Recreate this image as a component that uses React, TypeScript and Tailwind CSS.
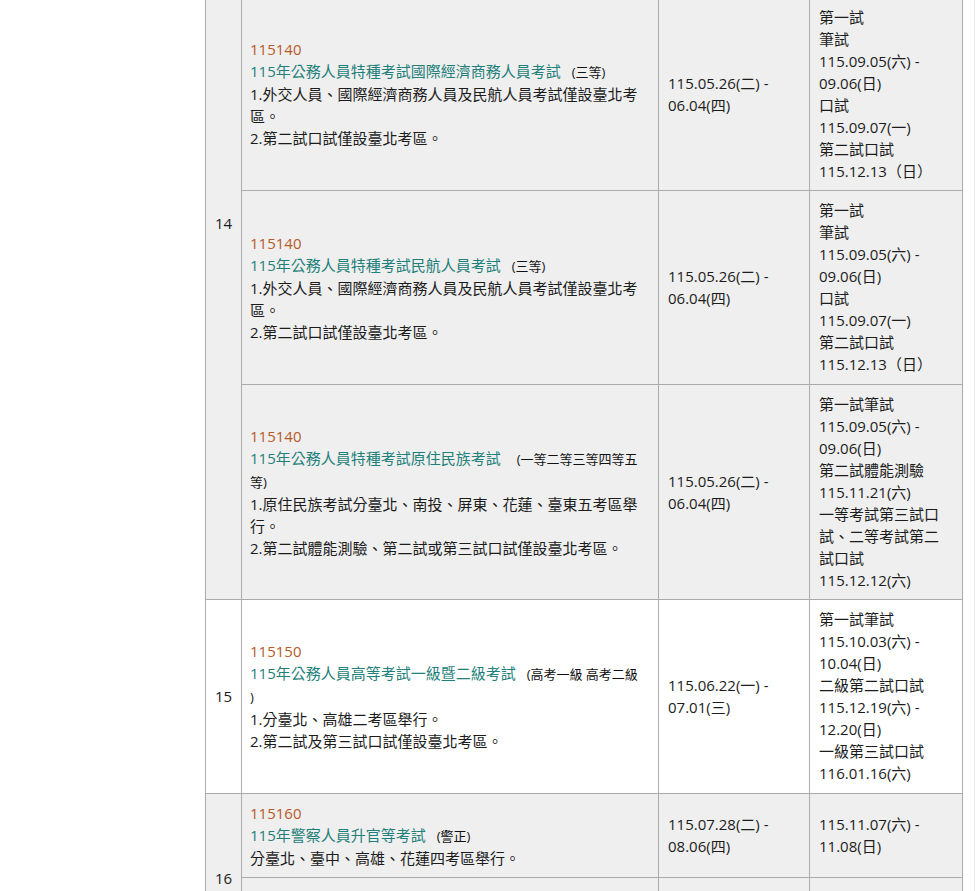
import React from "react";

const ORANGE = "text-[#b85a2a]";
const TEAL = "text-[#1f7f7a]";

type Item = {
  code: string;
  title: string;
  level: React.ReactNode;
  levelGap?: boolean;
  notes: React.ReactNode[];
  apply: React.ReactNode[];
  exam: React.ReactNode[];
};

function Middle({ it }: { it: Item }) {
  return (
    <>
      <div className={ORANGE}>{it.code}</div>
      <div>
        <span className={TEAL}>{it.title}</span>{" "}
        <span className={"text-[13px] text-[#111] " + (it.levelGap ? "ml-[12px]" : "ml-[7px]")}>{it.level}</span>
      </div>
      {it.notes.map((n, i) => (
        <div key={i}>{n}</div>
      ))}
    </>
  );
}

function Lines({ lines }: { lines: React.ReactNode[] }) {
  return (
    <>
      {lines.map((l, i) => (
        <div key={i}>{l}</div>
      ))}
    </>
  );
}

const td = "border border-[#ababab] px-2 py-[8.25px] align-middle";
const tdR = "border border-[#ababab] pl-[9px] pr-[10px] py-[8.25px] align-middle";

const group14: Item[] = [
  {
    code: "115140",
    title: "115年公務人員特種考試外交領事人員及外交行政人員考試",
    level: "(三等)",
    notes: ["1.外交人員、國際經濟商務人員及民航人員考試僅設臺北考區。", "2.第二試口試僅設臺北考區。"],
    apply: ["115.05.26(二) -", "06.04(四)"],
    exam: ["第一試筆試", "115.09.05(六) -", "09.06(日)", "第二試口試", "115.12.13（日）"],
  },
  {
    code: "115140",
    title: "115年公務人員特種考試國際經濟商務人員考試",
    level: "(三等)",
    notes: ["1.外交人員、國際經濟商務人員及民航人員考試僅設臺北考區。", "2.第二試口試僅設臺北考區。"],
    apply: ["115.05.26(二) -", "06.04(四)"],
    exam: ["第一試", "筆試", "115.09.05(六) -", "09.06(日)", "口試", "115.09.07(一)", "第二試口試", "115.12.13（日）"],
  },
  {
    code: "115140",
    title: "115年公務人員特種考試民航人員考試",
    level: "(三等)",
    notes: ["1.外交人員、國際經濟商務人員及民航人員考試僅設臺北考區。", "2.第二試口試僅設臺北考區。"],
    apply: ["115.05.26(二) -", "06.04(四)"],
    exam: ["第一試", "筆試", "115.09.05(六) -", "09.06(日)", "口試", "115.09.07(一)", "第二試口試", "115.12.13（日）"],
  },
  {
    code: "115140",
    title: "115年公務人員特種考試原住民族考試",
    level: (
      <>
        (一等二等三等四等五
        <br />
        等)
      </>
    ),
    levelGap: true,
    notes: ["1.原住民族考試分臺北、南投、屏東、花蓮、臺東五考區舉行。", "2.第二試體能測驗、第二試或第三試口試僅設臺北考區。"],
    apply: ["115.05.26(二) -", "06.04(四)"],
    exam: ["第一試筆試", "115.09.05(六) -", "09.06(日)", "第二試體能測驗", "115.11.21(六)", "一等考試第三試口試、二等考試第二試口試", "115.12.12(六)"],
  },
];

const group15: Item[] = [
  {
    code: "115150",
    title: "115年公務人員高等考試一級暨二級考試",
    level: (
      <>
        (高考一級 高考二級
        <br />)
      </>
    ),
    notes: ["1.分臺北、高雄二考區舉行。", "2.第二試及第三試口試僅設臺北考區。"],
    apply: ["115.06.22(一) -", "07.01(三)"],
    exam: ["第一試筆試", "115.10.03(六) -", "10.04(日)", "二級第二試口試", "115.12.19(六) -", "12.20(日)", "一級第三試口試", "116.01.16(六)"],
  },
];

const group16: Item[] = [
  {
    code: "115160",
    title: "115年警察人員升官等考試",
    level: "(警正)",
    notes: ["分臺北、臺中、高雄、花蓮四考區舉行。"],
    apply: ["115.07.28(二) -", "08.06(四)"],
    exam: ["115.11.07(六) -", "11.08(日)"],
  },
  {
    code: "115160",
    title: "115年警察人員升官等考試",
    level: "(警佐)",
    notes: ["分臺北、臺中、高雄、花蓮四考區舉行。"],
    apply: ["115.07.28(二) -", "08.06(四)"],
    exam: ["115.11.07(六) -", "11.08(日)"],
  },
];

function Group({ no, items, bg }: { no: string; items: Item[]; bg: string }) {
  return (
    <>
      {items.map((it, i) => (
        <tr key={i} className={bg}>
          {i === 0 && (
            <td rowSpan={items.length} className={td + " text-center !px-0"}>
              {no}
            </td>
          )}
          <td className={td}>
            <Middle it={it} />
          </td>
          <td className={tdR}>
            <Lines lines={it.apply} />
          </td>
          <td className={tdR}>
            <Lines lines={it.exam} />
          </td>
        </tr>
      ))}
    </>
  );
}

export default function App() {
  return (
    <div className="relative w-[976px] h-[891px] overflow-hidden bg-white text-[15px] leading-[22px] text-[#1c1c1c] font-['Open_Sans','Noto_Sans_CJK_TC',sans-serif]">
      <div className="pl-[205px]">
        <table className="table-fixed w-[757px] -mt-[154px] border-collapse">
          <colgroup>
            <col className="w-[36px]" />
            <col className="w-[417px]" />
            <col className="w-[151px]" />
            <col className="w-[153px]" />
          </colgroup>
          <tbody>
            <Group no="14" items={group14} bg="bg-[#efefef]" />
            <Group no="15" items={group15} bg="bg-white" />
            <Group no="16" items={group16} bg="bg-[#efefef]" />
          </tbody>
        </table>
      </div>
      <div className="absolute top-0 bottom-0 left-[974px] w-px bg-[#ededed]" />
    </div>
  );
}
